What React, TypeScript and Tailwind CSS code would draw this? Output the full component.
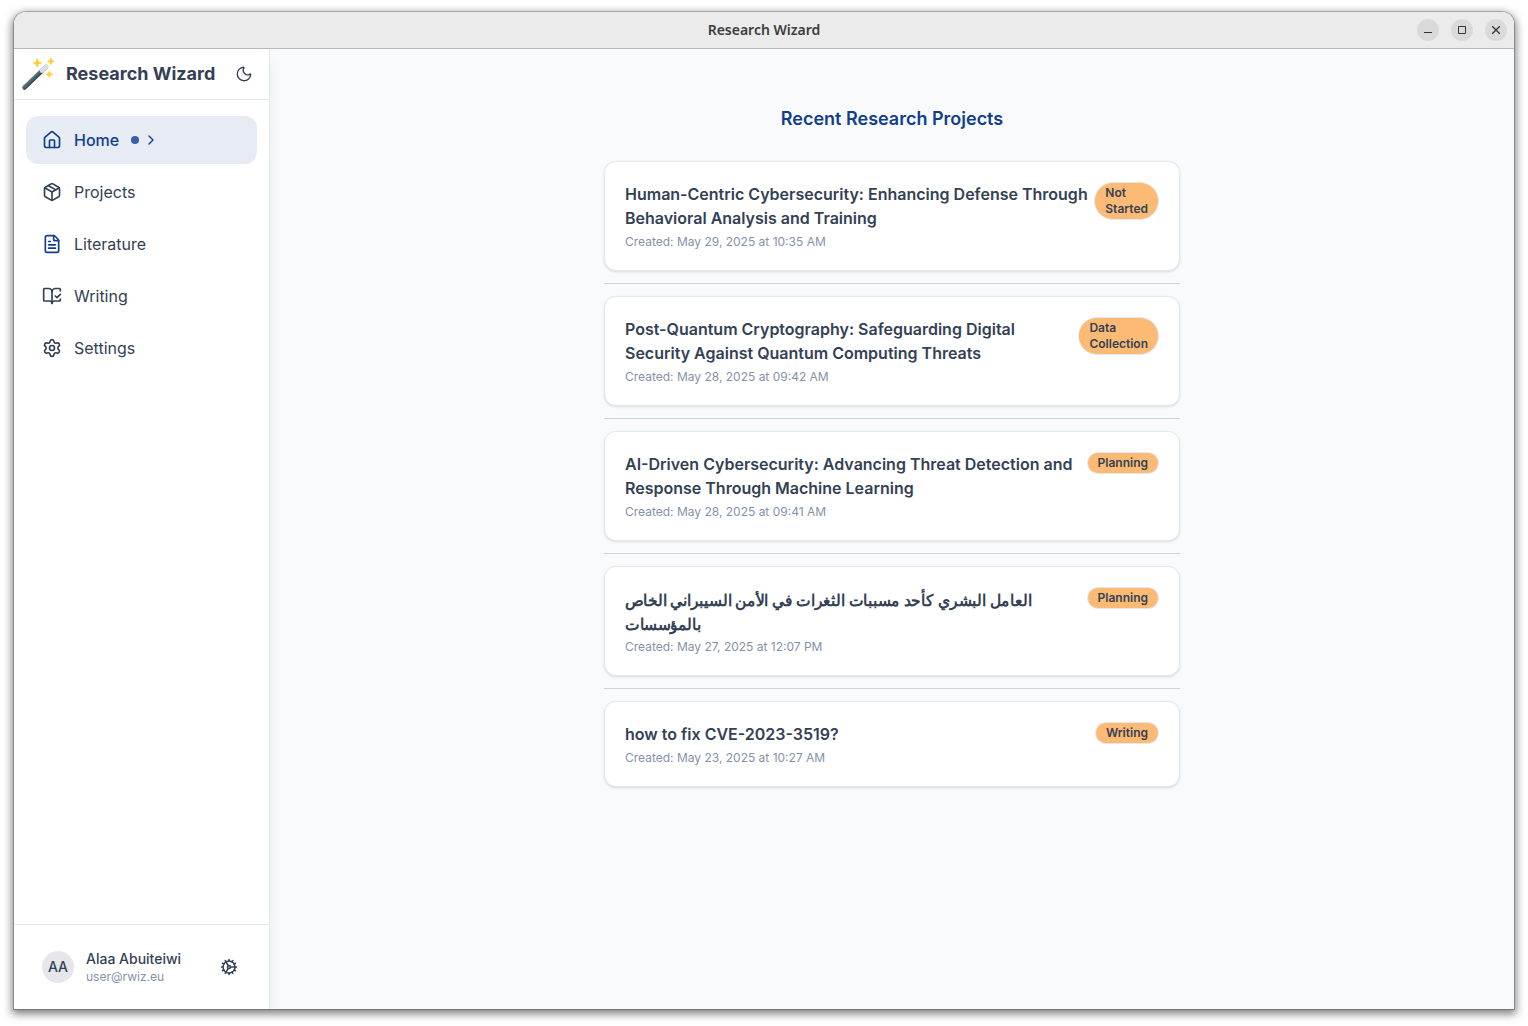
import React from 'react';
import { BookOpenCheck, ChevronRight, Cog, FileText, House, Moon, Package, Settings } from 'lucide-react';

const navItems = [
  { label: 'Home', Icon: House, active: true },
  { label: 'Projects', Icon: Package },
  { label: 'Literature', Icon: FileText, accent: true },
  { label: 'Writing', Icon: BookOpenCheck },
  { label: 'Settings', Icon: Settings },
];

type Project = { title: string[]; created: string; status: string[]; arabic?: boolean };

const projects: Project[] = [
  {
    title: ['Human-Centric Cybersecurity: Enhancing Defense Through', 'Behavioral Analysis and Training'],
    created: 'May 29, 2025 at 10:35 AM',
    status: ['Not', 'Started'],
  },
  {
    title: ['Post-Quantum Cryptography: Safeguarding Digital', 'Security Against Quantum Computing Threats'],
    created: 'May 28, 2025 at 09:42 AM',
    status: ['Data', 'Collection'],
  },
  {
    title: ['AI-Driven Cybersecurity: Advancing Threat Detection and', 'Response Through Machine Learning'],
    created: 'May 28, 2025 at 09:41 AM',
    status: ['Planning'],
  },
  {
    title: ['العامل البشري كأحد مسببات الثغرات في الأمن السيبراني الخاص', 'بالمؤسسات'],
    created: 'May 27, 2025 at 12:07 PM',
    status: ['Planning'],
    arabic: true,
  },
  { title: ['how to fix CVE-2023-3519?'], created: 'May 23, 2025 at 10:27 AM', status: ['Writing'] },
];

function Wand() {
  return (
    <svg width="34" height="34" viewBox="0 0 34 34" className="shrink-0">
      <defs>
        <linearGradient id="stick" x1="11.6" y1="17.6" x2="15.4" y2="21.4" gradientUnits="userSpaceOnUse">
          <stop offset="0" stopColor="#37525a" />
          <stop offset="0.4" stopColor="#61777e" />
          <stop offset="1" stopColor="#2f4850" />
        </linearGradient>
      </defs>
      <path d="M3.4 30.6 25 9.8" stroke="url(#stick)" strokeWidth="4.4" strokeLinecap="round" />
      <path d="M21 13.6 25.3 9.5" stroke="#dcdfe1" strokeWidth="4.6" strokeLinecap="round" />
      <g fill="#fdd033" stroke="#fdd033" strokeWidth="0.5" strokeLinejoin="round">
        <path d="M16.2 1.6 17.6 4.8 20.6 6 17.6 7.2 16.2 10.3 14.8 7.2 11.8 6 14.8 4.8Z" />
        <path d="M29.8 1 30.9 3.3 33.3 4.4 30.9 5.5 29.8 7.8 28.7 5.5 26.3 4.4 28.7 3.3Z" />
        <path d="M28.3 14 29.4 16.3 31.8 17.4 29.4 18.5 28.3 20.8 27.2 18.5 24.8 17.4 27.2 16.3Z" />
      </g>
    </svg>
  );
}

function WindowButton({ children }: { children: React.ReactNode }) {
  return (
    <span className="flex size-[22px] items-center justify-center rounded-full bg-[#dadada]">
      <svg width="16" height="16" viewBox="0 0 16 16" fill="none" stroke="#333333">
        {children}
      </svg>
    </span>
  );
}

function TitleBar() {
  return (
    <div className="grid h-[37px] shrink-0 grid-cols-[1fr_auto_1fr] items-center border-b border-[#b8b8b8] bg-[#ebebeb]">
      <span />
      <span className="font-['Noto_Sans',sans-serif] text-[14px] leading-5 font-semibold text-[#3d3d3d]">
        Research Wizard
      </span>
      <div className="flex justify-end gap-3 pr-[7px]">
        <WindowButton>
          <path d="M4 10.5h8" />
        </WindowButton>
        <WindowButton>
          <path d="M4.5 4.5h7v7h-7z" />
        </WindowButton>
        <WindowButton>
          <path d="m4.2 4.2 7.6 7.6m0-7.6-7.6 7.6" strokeWidth="1.3" />
        </WindowButton>
      </div>
    </div>
  );
}

function Sidebar() {
  return (
    <aside className="z-10 flex w-64 shrink-0 flex-col border-r border-[#e2e8f0] bg-white shadow-[0_10px_15px_-3px_rgba(0,0,0,0.1)]">
      <div className="flex h-[51px] shrink-0 items-center border-b border-[#e2e8f0] pl-[7px]">
        <Wand />
        <h1 className="ml-[11px] w-[150px] text-lg font-bold whitespace-nowrap text-[#334155]">Research Wizard</h1>
        <Moon size={18} strokeWidth={1.8} className="ml-[19px] text-[#334155]" />
      </div>
      <nav className="flex flex-1 flex-col gap-1 px-3 py-4">
        {navItems.map(({ label, Icon, active, accent }) => (
          <a
            key={label}
            className={
              active
                ? 'flex h-12 items-center rounded-xl bg-[#e6ebf4] px-4 font-medium text-[#123e8a]'
                : 'flex h-12 items-center rounded-xl px-4 text-[#334155]'
            }
          >
            <Icon size={20} strokeWidth={2} className={accent ? 'mr-3 text-[#123e8a]' : 'mr-3'} />
            {label}
            {active && (
              <>
                <span className="ml-3 size-2 rounded-full bg-[#3a5fa3]" />
                <ChevronRight size={16} className="ml-1" />
              </>
            )}
          </a>
        ))}
      </nav>
      <div className="flex h-[85px] shrink-0 items-center border-t border-[#e2e8f0] pl-7">
        <span className="flex size-8 items-center justify-center rounded-full bg-gray-200 text-sm font-medium text-[#334155]">
          AA
        </span>
        <div className="ml-3 w-[134px]">
          <p className="text-sm leading-5 font-medium text-[#334155]">Alaa Abuiteiwi</p>
          <p className="text-xs leading-4 text-[#8492a9]">user@rwiz.eu</p>
        </div>
        <Cog size={18} className="text-[#334155]" />
      </div>
    </aside>
  );
}

function ProjectCard({ project }: { project: Project }) {
  return (
    <article className="flex items-start justify-between rounded-xl border border-[#e2e8f0] bg-white p-5 shadow-sm">
      <div>
        <h3
          className={
            project.arabic
              ? 'origin-left scale-x-[0.967] text-base leading-[26px] font-semibold whitespace-nowrap text-[#334155]'
              : 'text-base leading-6 font-semibold whitespace-nowrap text-[#334155]'
          }
        >
          {project.title.map((line) => (
            <span key={line} className="block h-6">
              {line}
            </span>
          ))}
        </h3>
        <p className="mt-1 text-xs leading-4 text-[#8492a9]">Created: {project.created}</p>
      </div>
      <span className="rounded-full border border-[#e2e8f0] bg-[#fdba74] px-2.5 py-0.5 text-xs leading-4 font-semibold text-[#334155]">
        {project.status.map((line) => (
          <span key={line} className="block">
            {line}
          </span>
        ))}
      </span>
    </article>
  );
}

export default function App() {
  return (
    <div className="h-[1026px] bg-white px-[13px] pt-[11px] pb-4 font-['Inter',sans-serif]">
      <div className="h-full rounded-t-[13px] border border-[#8c8c8c] border-t-[#a8a8a8] border-b-[#777777] shadow-[0_3px_9px_1px_rgba(0,0,0,0.5)]">
        <div className="flex h-full flex-col overflow-hidden rounded-t-xl">
          <TitleBar />
          <div className="flex min-h-0 flex-1">
            <Sidebar />
            <main className="flex-1 bg-[#f8fafc] pt-14">
              <h2 className="text-center text-lg leading-7 font-semibold text-[#123e8a]">Recent Research Projects</h2>
              <div className="mx-auto mt-7 w-xl">
                {projects.map((project, i) => (
                  <React.Fragment key={project.created}>
                    {i > 0 && <hr className="my-3 border-[#cbd5e1]" />}
                    <ProjectCard project={project} />
                  </React.Fragment>
                ))}
              </div>
            </main>
          </div>
        </div>
      </div>
    </div>
  );
}
